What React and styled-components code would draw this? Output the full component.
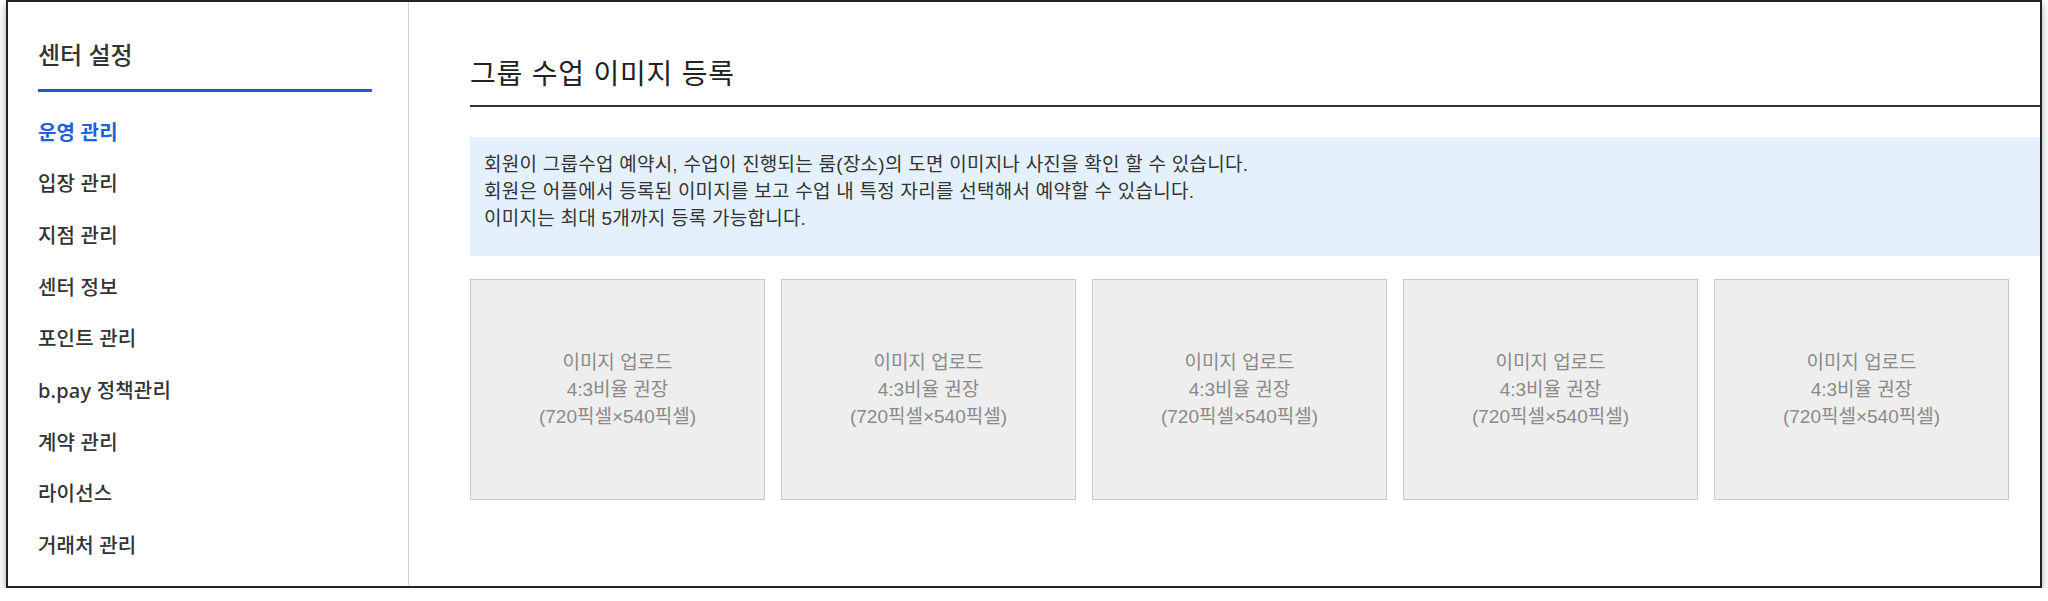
import styled, { createGlobalStyle } from "styled-components";

const GlobalStyle = createGlobalStyle`
  html, body {
    margin: 0;
    padding: 0;
    background: #ffffff;
  }
  body {
    font-family: "Liberation Sans", "Noto Sans CJK KR", sans-serif;
    color: #333333;
  }
  * {
    box-sizing: border-box;
  }
`;

const Frame = styled.div`
  display: flex;
  width: 2036px;
  height: 588px;
  margin-left: 6px;
  border: 2px solid #222222;
  background: #ffffff;
  box-shadow: 0 4px 8px rgba(0, 0, 0, 0.35);
  overflow: hidden;
`;

const Sidebar = styled.aside`
  flex: 0 0 401px;
  display: flex;
  flex-direction: column;
  padding: 38px 36px 0 30px;
  border-right: 1px solid #d2d2d2;
  font-family: "Noto Sans", "Noto Sans CJK KR", sans-serif;
`;

const SideTitle = styled.h2`
  margin: 0;
  padding-bottom: 19px;
  border-bottom: 3px solid #1a5bd6;
  font-size: 24px;
  font-weight: 500;
  line-height: 30px;
  color: #333333;
`;

const Menu = styled.ul`
  margin: 14.5px 0 0;
  padding: 0;
  list-style: none;
`;

const MenuItem = styled.li`
  font-size: 20px;
  line-height: 51.7px;
  letter-spacing: 0.2px;
  font-weight: ${(props) => (props.$active ? 700 : 500)};
  color: ${(props) => (props.$active ? "#1d62d8" : "#333333")};
`;

const Main = styled.main`
  flex: 1;
  min-width: 0;
  padding: 55px 0 0 61px;
`;

const Title = styled.h1`
  margin: 0;
  padding-bottom: 12px;
  border-bottom: 2px solid #333333;
  font-size: 28px;
  font-weight: 400;
  line-height: 36px;
  letter-spacing: 0.8px;
  color: #222222;
`;

const Notice = styled.div`
  margin-top: 30px;
  padding: 14px 16px 24px 14px;
  background: #e4f1fc;
  font-size: 19px;
  line-height: 27px;
  letter-spacing: 0.25px;
  color: #333333;
`;

const CardRow = styled.div`
  display: flex;
  gap: 16px;
  margin-top: 23px;
`;

const UploadCard = styled.div`
  flex: 0 0 295px;
  height: 221px;
  display: flex;
  flex-direction: column;
  align-items: center;
  justify-content: center;
  background: #eeeeee;
  border: 1px solid #c8c8c8;
  font-size: 19px;
  line-height: 27px;
  color: #8a8a8a;
  text-align: center;
`;

const menu = [
  "운영 관리",
  "입장 관리",
  "지점 관리",
  "센터 정보",
  "포인트 관리",
  "b.pay 정책관리",
  "계약 관리",
  "라이선스",
  "거래처 관리",
];

function App() {
  return (
    <>
      <GlobalStyle />
      <Frame>
        <Sidebar>
          <SideTitle>센터 설정</SideTitle>
          <Menu>
            {menu.map((item, i) => (
              <MenuItem key={item} $active={i === 0}>
                {item}
              </MenuItem>
            ))}
          </Menu>
        </Sidebar>

        <Main>
          <Title>그룹 수업 이미지 등록</Title>

          <Notice>
            <div>
              회원이 그룹수업 예약시, 수업이 진행되는 룸(장소)의 도면 이미지나
              사진을 확인 할 수 있습니다.
            </div>
            <div>
              회원은 어플에서 등록된 이미지를 보고 수업 내 특정 자리를 선택해서
              예약할 수 있습니다.
            </div>
            <div>이미지는 최대 5개까지 등록 가능합니다.</div>
          </Notice>

          <CardRow>
            {[0, 1, 2, 3, 4].map((n) => (
              <UploadCard key={n}>
                <div>이미지 업로드</div>
                <div>4:3비율 권장</div>
                <div>(720픽셀×540픽셀)</div>
              </UploadCard>
            ))}
          </CardRow>
        </Main>
      </Frame>
    </>
  );
}

export default App;
